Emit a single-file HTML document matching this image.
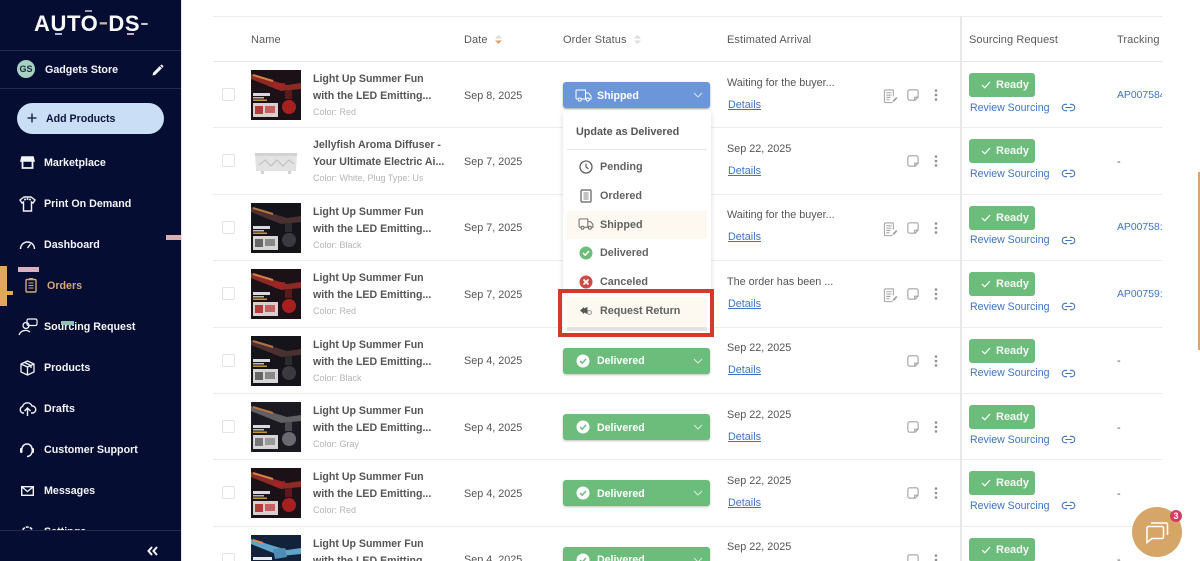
<!DOCTYPE html>
<html lang="en"><head><meta charset="utf-8"><title>Orders</title>
<style>
*{box-sizing:border-box}
html,body{margin:0;padding:0;width:1200px;height:561px;overflow:hidden;background:#fff;font-family:"Liberation Sans",sans-serif;color:#4f4f4f}
.a{position:absolute;white-space:nowrap}
#side{position:absolute;left:0;top:0;width:181px;height:561px;background:#060d33;overflow:hidden}
.nav{position:absolute;left:44px;font-size:10.7px;font-weight:bold;color:#f4f5f8;line-height:14px;white-space:nowrap}
.ic{position:absolute;fill:none;stroke:#f4f5f8;stroke-width:1.6}
#table{position:absolute;left:213px;top:0;width:949px;height:561px;overflow:hidden}
.row{position:absolute;left:0;width:949px;height:66.4px;border-bottom:1px solid #ececec}
.row>*{position:absolute;white-space:nowrap}
.cb{left:9px;top:26px;width:13px;height:13px;border:1px solid #e4e4e4;border-radius:2px}
.img{left:38px;top:8px;width:50px;height:50px}
.t1,.t2{left:100px;font-size:10.6px;font-weight:bold;color:#555;line-height:14px}
.t1{top:10px}.t2{top:27px}
.c{left:100px;top:44px;font-size:9px;color:#b5b5b5;line-height:12px}
.d{left:251px;top:26.500px;font-size:10.800px;color:#555;line-height:14px}
.s{left:350px;top:20px;width:147px;height:26px;border-radius:3px;background:#6cbd7c;box-shadow:0 1px 2px rgba(0,0,0,.25)}
.s b{position:absolute;left:34px;top:6.500px;font-size:10.600px;line-height:14px;color:#fff}
.s svg{position:absolute}
.e{left:514px;top:13.500px;font-size:10.800px;color:#555;line-height:14px}
.l{left:515px;top:35.500px;font-size:10.800px;color:#3f74c4;line-height:14px;text-decoration:underline}
.r{left:756px;top:11px;width:66px;height:24px;background:#6cbd7c;border-radius:3px;color:#f2f8f3;font-size:11px;font-weight:bold;line-height:25px;padding-left:27px}
.r svg{position:absolute;left:12px;top:8px}
.v{left:757px;top:38.500px;font-size:10.600px;color:#3f74c4;line-height:14px}
.lk{left:848px;top:41px}
.tk{left:904px;top:26.500px;font-size:10.400px;color:#3f74c4;line-height:14px}
.st{left:694px;top:27px}.dt{left:721px;top:27px}
.dash{left:904px;top:26.500px;font-size:11px;color:#555;line-height:14px}
.h{position:absolute;top:32.500px;font-size:11px;color:#5a5a5a;line-height:14px;white-space:nowrap;letter-spacing:.1px}
.mi{position:absolute;left:600px;font-size:10.800px;font-weight:bold;color:#626262;line-height:14px;white-space:nowrap}
.mic{position:absolute;left:579px}
</style></head><body>
<svg width="0" height="0" style="position:absolute">
<defs>
<symbol id="prod" viewBox="0 0 50 50">
<rect width="50" height="50" fill="#1b1116"/>
<path d="M0 4L36 15L50 13V19L30 21L0 9Z" fill="#8c2a26"/><path d="M2 5L22 11" stroke="#d97f45" stroke-width="2"/>
<path d="M22 14L34 13L32 18L24 19Z" fill="#a32422"/>
<circle cx="38" cy="37" r="7" fill="#a6201f"/><rect x="34" y="20" width="7" height="9" fill="#5b1a1c"/>
<rect x="2" y="23" width="17" height="3" fill="#d8d8e0"/><rect x="2" y="27" width="11" height="1.500" fill="#bbb"/><rect x="2" y="29.500" width="14" height="1.500" fill="#c89a2e"/>
<rect x="2" y="33" width="25" height="14" fill="#d8cfcf"/><rect x="4" y="36" width="8" height="8" fill="#b53a3a"/><rect x="14" y="36" width="10" height="7" fill="#c76060"/>
</symbol>
<symbol id="prodb" viewBox="0 0 50 50">
<rect width="50" height="50" fill="#13213a"/>
<path d="M0 4L36 15L50 13V19L30 21L0 9Z" fill="#5fa5c9"/><path d="M2 5L12 8" stroke="#e5874b" stroke-width="2"/>
<path d="M22 14L34 13L36 22L24 24Z" fill="#4d8db5"/>
<rect x="2" y="22" width="19" height="3" fill="#e8e8ef"/>
</symbol>
<symbol id="prodk" viewBox="0 0 50 50">
<rect width="50" height="50" fill="#15141a"/>
<path d="M0 4L36 15L50 13V19L30 21L0 9Z" fill="#4a3030"/><path d="M2 5L22 11" stroke="#b8743f" stroke-width="2"/>
<circle cx="38" cy="37" r="7" fill="#3c3a40"/><rect x="34" y="20" width="7" height="9" fill="#2c2c2e"/>
<rect x="2" y="23" width="17" height="3" fill="#d8d8e0"/><rect x="2" y="27" width="11" height="1.500" fill="#bbb"/><rect x="2" y="29.500" width="14" height="1.500" fill="#c89a2e"/>
<rect x="2" y="33" width="25" height="14" fill="#d6d4d4"/><rect x="4" y="36" width="8" height="8" fill="#666"/><rect x="14" y="36" width="10" height="7" fill="#888"/>
</symbol>
<symbol id="prodg" viewBox="0 0 50 50">
<rect width="50" height="50" fill="#1a1a20"/>
<path d="M0 4L36 15L50 13V19L30 21L0 9Z" fill="#5f5f64"/><path d="M2 5L22 11" stroke="#b8743f" stroke-width="2"/>
<circle cx="38" cy="37" r="7" fill="#6a6a70"/><rect x="34" y="20" width="7" height="9" fill="#4a4a4e"/>
<rect x="2" y="23" width="17" height="3" fill="#d8d8e0"/><rect x="2" y="27" width="11" height="1.500" fill="#bbb"/><rect x="2" y="29.500" width="14" height="1.500" fill="#c89a2e"/>
<rect x="2" y="33" width="25" height="14" fill="#d6d4d4"/><rect x="4" y="36" width="8" height="8" fill="#777"/><rect x="14" y="36" width="10" height="7" fill="#999"/>
</symbol>
<symbol id="note" viewBox="0 0 14 14"><path d="M9.500 13H3a2 2 0 0 1-2-2V3a2 2 0 0 1 2-2h8a2 2 0 0 1 2 2v6.500L9.500 13ZM9 13V9.500h4" fill="none" stroke="#a3a3a3" stroke-width="1.300"/></symbol>
<symbol id="dots" viewBox="0 0 4 12"><circle cx="2" cy="1.500" r="1.300" fill="#8f8f8f"/><circle cx="2" cy="6" r="1.300" fill="#8f8f8f"/><circle cx="2" cy="10.500" r="1.300" fill="#8f8f8f"/></symbol>
<symbol id="doc" viewBox="0 0 16 16"><path d="M10 14.500H2.500A1 1 0 0 1 1.500 13.500V2A1 1 0 0 1 2.500 1H11V8M3.500 4H9M3.500 6.500H9M3.500 9H8M3.500 11.500H7" fill="none" stroke="#a3a3a3" stroke-width="1.100"/><path d="M10 14L11 11.500L14 8.500L15.500 9.500L12.500 13Z" fill="#a3a3a3"/></symbol>
<symbol id="link" viewBox="0 0 16 10"><path d="M6.500 1.500H4.500a3.500 3.500 0 0 0 0 7H6.500M9.500 1.500h2a3.500 3.500 0 0 1 0 7H9.500M4.500 5h7" fill="none" stroke="#3f74c4" stroke-width="1.200"/></symbol>
<symbol id="truck" viewBox="0 0 17 13"><path d="M3 10H2A1 1 0 0 1 1 9V2A1 1 0 0 1 2 1H10.500V10H6.500M10.500 4H13.500L16 7V10H14.500M10.500 10H11" fill="none" stroke="currentColor" stroke-width="1"/><circle cx="4.700" cy="10.500" r="1.600" fill="none" stroke="currentColor"/><circle cx="12.700" cy="10.500" r="1.600" fill="none" stroke="currentColor"/></symbol>
<symbol id="chk" viewBox="0 0 10 8"><path d="M1 4L3.800 6.800L9 1" fill="none" stroke="#fff" stroke-width="1.200"/></symbol>
<symbol id="chv" viewBox="0 0 10 6"><path d="M1 1L5 5L9 1" fill="none" stroke="#fff" stroke-width=".9" opacity=".8"/></symbol>
</defs></svg>

<div id="table">
<div class="a" style="left:0;top:16px;width:949px;height:1px;background:#ececec"></div>
<div class="a" style="left:0;top:61px;width:949px;height:1px;background:#e6e6e6"></div>
<div class="h" style="left:38px">Name</div>
<div class="h" style="left:251px">Date</div>
<svg class="a" style="left:281px;top:34px" width="9" height="11" viewBox="0 0 9 11"><path d="M1 4.500L4.500 1L8 4.500Z" fill="#dcdcdc"/><path d="M1 6.500L4.500 10L8 6.500Z" fill="#d9a766"/></svg>
<div class="h" style="left:350px">Order Status</div>
<svg class="a" style="left:420px;top:34px" width="9" height="11" viewBox="0 0 9 11"><path d="M1 4.500L4.500 1L8 4.500Z" fill="#dcdcdc"/><path d="M1 6.500L4.500 10L8 6.500Z" fill="#dcdcdc"/></svg>
<div class="h" style="left:514px">Estimated Arrival</div>
<div class="h" style="left:756px">Sourcing Request</div>
<div class="h" style="left:904px">Tracking</div>

<!-- row 1 -->
<div class="row" style="top:62px">
<div class="cb"></div><svg class="img"><use href="#prod"/></svg>
<div class="t1">Light Up Summer Fun</div><div class="t2">with the LED Emitting...</div><div class="c">Color: Red</div>
<div class="d">Sep 8, 2025</div>
<div class="e">Waiting for the buyer...</div><div class="l">Details</div>
<svg style="left:670px;top:27px" width="15" height="15"><use href="#doc"/></svg>
<svg class="st" width="12" height="12"><use href="#note"/></svg><svg class="dt" width="4" height="12"><use href="#dots"/></svg>
<div class="r"><svg width="10" height="8"><use href="#chk"/></svg>Ready</div><div class="v">Review Sourcing</div><svg class="lk" width="15" height="9"><use href="#link"/></svg>
<div class="tk" style="width:45px;overflow:hidden">AP00758422</div>
</div>
<!-- row 2 -->
<div class="row" style="top:128.400px">
<div class="cb"></div>
<svg class="img" viewBox="0 0 50 50"><path d="M4 17H46L45 35H5Z" fill="#e2e2e2"/><path d="M4 17H46V20H4Z" fill="#d2d2d2"/><path d="M8 29L14 24L20 30L26 24L32 30L38 24L43 28" stroke="#bdbdbd" fill="none"/><rect x="10" y="35" width="3" height="3" fill="#d2d2d2"/><rect x="37" y="35" width="3" height="3" fill="#d2d2d2"/></svg>
<div class="t1">Jellyfish Aroma Diffuser -</div><div class="t2">Your Ultimate Electric Ai...</div><div class="c">Color: White, Plug Type: Us</div>
<div class="d">Sep 7, 2025</div>
<div class="e">Sep 22, 2025</div><div class="l">Details</div>
<svg class="st" width="12" height="12"><use href="#note"/></svg><svg class="dt" width="4" height="12"><use href="#dots"/></svg>
<div class="r"><svg width="10" height="8"><use href="#chk"/></svg>Ready</div><div class="v">Review Sourcing</div><svg class="lk" width="15" height="9"><use href="#link"/></svg>
<div class="dash">-</div>
</div>
<!-- row 3 -->
<div class="row" style="top:194.800px">
<div class="cb"></div><svg class="img"><use href="#prodk"/></svg>
<div class="t1">Light Up Summer Fun</div><div class="t2">with the LED Emitting...</div><div class="c">Color: Black</div>
<div class="d">Sep 7, 2025</div>
<div class="e">Waiting for the buyer...</div><div class="l">Details</div>
<svg style="left:670px;top:27px" width="15" height="15"><use href="#doc"/></svg>
<svg class="st" width="12" height="12"><use href="#note"/></svg><svg class="dt" width="4" height="12"><use href="#dots"/></svg>
<div class="r"><svg width="10" height="8"><use href="#chk"/></svg>Ready</div><div class="v">Review Sourcing</div><svg class="lk" width="15" height="9"><use href="#link"/></svg>
<div class="tk" style="width:45px;overflow:hidden">AP00758:22</div>
</div>
<!-- row 4 -->
<div class="row" style="top:261.200px">
<div class="cb"></div><svg class="img"><use href="#prod"/></svg>
<div class="t1">Light Up Summer Fun</div><div class="t2">with the LED Emitting...</div><div class="c">Color: Red</div>
<div class="d">Sep 7, 2025</div>
<div class="e">The order has been ...</div><div class="l">Details</div>
<svg style="left:670px;top:27px" width="15" height="15"><use href="#doc"/></svg>
<svg class="st" width="12" height="12"><use href="#note"/></svg><svg class="dt" width="4" height="12"><use href="#dots"/></svg>
<div class="r"><svg width="10" height="8"><use href="#chk"/></svg>Ready</div><div class="v">Review Sourcing</div><svg class="lk" width="15" height="9"><use href="#link"/></svg>
<div class="tk" style="width:45px;overflow:hidden">AP00759:22</div>
</div>
<!-- row 5 -->
<div class="row" style="top:327.600px">
<div class="cb"></div><svg class="img"><use href="#prodk"/></svg>
<div class="t1">Light Up Summer Fun</div><div class="t2">with the LED Emitting...</div><div class="c">Color: Black</div>
<div class="d">Sep 4, 2025</div>
<div class="s"><svg style="left:13px;top:6px" width="14" height="14" viewBox="0 0 14 14"><circle cx="7" cy="7" r="6.500" fill="#fff"/><path d="M4 7L6.200 9.200L10 5" fill="none" stroke="#6cbd7c" stroke-width="1.500"/></svg><b>Delivered</b><svg style="left:130px;top:10px" width="10" height="6"><use href="#chv"/></svg></div>
<div class="e">Sep 22, 2025</div><div class="l">Details</div>
<svg class="st" width="12" height="12"><use href="#note"/></svg><svg class="dt" width="4" height="12"><use href="#dots"/></svg>
<div class="r"><svg width="10" height="8"><use href="#chk"/></svg>Ready</div><div class="v">Review Sourcing</div><svg class="lk" width="15" height="9"><use href="#link"/></svg>
<div class="dash">-</div>
</div>
<!-- row 6 -->
<div class="row" style="top:394px">
<div class="cb"></div><svg class="img"><use href="#prodg"/></svg>
<div class="t1">Light Up Summer Fun</div><div class="t2">with the LED Emitting...</div><div class="c">Color: Gray</div>
<div class="d">Sep 4, 2025</div>
<div class="s"><svg style="left:13px;top:6px" width="14" height="14" viewBox="0 0 14 14"><circle cx="7" cy="7" r="6.500" fill="#fff"/><path d="M4 7L6.200 9.200L10 5" fill="none" stroke="#6cbd7c" stroke-width="1.500"/></svg><b>Delivered</b><svg style="left:130px;top:10px" width="10" height="6"><use href="#chv"/></svg></div>
<div class="e">Sep 22, 2025</div><div class="l">Details</div>
<svg class="st" width="12" height="12"><use href="#note"/></svg><svg class="dt" width="4" height="12"><use href="#dots"/></svg>
<div class="r"><svg width="10" height="8"><use href="#chk"/></svg>Ready</div><div class="v">Review Sourcing</div><svg class="lk" width="15" height="9"><use href="#link"/></svg>
<div class="dash">-</div>
</div>
<!-- row 7 -->
<div class="row" style="top:460.400px">
<div class="cb"></div><svg class="img"><use href="#prod"/></svg>
<div class="t1">Light Up Summer Fun</div><div class="t2">with the LED Emitting...</div><div class="c">Color: Red</div>
<div class="d">Sep 4, 2025</div>
<div class="s"><svg style="left:13px;top:6px" width="14" height="14" viewBox="0 0 14 14"><circle cx="7" cy="7" r="6.500" fill="#fff"/><path d="M4 7L6.200 9.200L10 5" fill="none" stroke="#6cbd7c" stroke-width="1.500"/></svg><b>Delivered</b><svg style="left:130px;top:10px" width="10" height="6"><use href="#chv"/></svg></div>
<div class="e">Sep 22, 2025</div><div class="l">Details</div>
<svg class="st" width="12" height="12"><use href="#note"/></svg><svg class="dt" width="4" height="12"><use href="#dots"/></svg>
<div class="r"><svg width="10" height="8"><use href="#chk"/></svg>Ready</div><div class="v">Review Sourcing</div><svg class="lk" width="15" height="9"><use href="#link"/></svg>
<div class="dash">-</div>
</div>
<!-- row 8 -->
<div class="row" style="top:526.800px;height:34.200px;overflow:hidden;border-bottom:0">
<div class="cb"></div><svg class="img"><use href="#prodb"/></svg>
<div class="t1">Light Up Summer Fun</div><div class="t2">with the LED Emitting...</div>
<div class="d">Sep 4, 2025</div>
<div class="s"><svg style="left:13px;top:6px" width="14" height="14" viewBox="0 0 14 14"><circle cx="7" cy="7" r="6.500" fill="#fff"/><path d="M4 7L6.200 9.200L10 5" fill="none" stroke="#6cbd7c" stroke-width="1.500"/></svg><b>Delivered</b><svg style="left:130px;top:10px" width="10" height="6"><use href="#chv"/></svg></div>
<div class="e">Sep 22, 2025</div>
<svg class="st" width="12" height="12"><use href="#note"/></svg><svg class="dt" width="4" height="12"><use href="#dots"/></svg>
<div class="r"><svg width="10" height="8"><use href="#chk"/></svg>Ready</div>
<div class="dash">-</div>
</div>
</div>

<!-- column divider -->
<div class="a" style="left:960px;top:16px;width:2px;height:545px;background:#e8e8e8"></div>
<div class="a" style="left:1198px;top:172px;width:2px;height:178px;background:#dfa36c"></div>

<!-- shipped button -->
<div class="a" style="left:563px;top:82px;width:147px;height:26px;border-radius:3px;background:#6b97da;box-shadow:0 1px 2px rgba(0,0,0,.35)"></div>
<svg class="a" style="left:575px;top:89px;color:#fff" width="17" height="13"><use href="#truck"/></svg>
<div class="a" style="left:597px;top:88.500px;font-size:10.600px;font-weight:bold;color:#fff;line-height:14px">Shipped</div>
<svg class="a" style="left:693px;top:92px" width="10" height="6"><use href="#chv"/></svg>

<!-- dropdown -->
<div class="a" style="left:563px;top:110px;width:148px;height:224px;background:#fff;border-radius:3px;box-shadow:0 2px 6px rgba(0,0,0,.14)"></div>
<div class="a" style="left:576px;top:125px;font-size:10.800px;font-weight:bold;color:#555;line-height:14px">Update as Delivered</div>
<div class="a" style="left:567px;top:149px;width:140px;height:1px;background:#e8e8e8"></div>
<div class="a" style="left:567px;top:211px;width:140px;height:28px;background:#fdf8f0"></div>
<div class="a" style="left:567px;top:297px;width:140px;height:30px;background:#fdf8f0"></div>
<div class="a" style="left:567px;top:327px;width:140px;height:4px;background:#e4e2e0"></div>
<svg class="mic" style="top:160px" width="14" height="14" viewBox="0 0 14 14"><circle cx="7" cy="7" r="6" fill="none" stroke="#5f5f5f" stroke-width="1.300"/><path d="M7 3.500V7L9.500 9" fill="none" stroke="#5f5f5f" stroke-width="1.200"/></svg>
<div class="mi" style="top:160px">Pending</div>
<svg class="mic" style="left:580px;top:189px" width="12" height="14" viewBox="0 0 12 14"><rect x="1" y="1" width="10" height="12" rx="1" fill="none" stroke="#5f5f5f" stroke-width="1.200"/><path d="M3.500 4H8.500M3.500 6H8.500M3.500 8H8.500M3.500 10H8.500" stroke="#5f5f5f" stroke-width=".8"/></svg>
<div class="mi" style="top:189px">Ordered</div>
<svg class="mic" style="left:578px;top:218px;color:#5f5f5f" width="16" height="12"><use href="#truck"/></svg>
<div class="mi" style="top:218px">Shipped</div>
<svg class="mic" style="top:246px" width="14" height="14" viewBox="0 0 14 14"><circle cx="7" cy="7" r="6.500" fill="#6cbd7c"/><path d="M4 7L6.200 9.200L10 5" fill="none" stroke="#fff" stroke-width="1.500"/></svg>
<div class="mi" style="top:246px">Delivered</div>
<svg class="mic" style="top:275px" width="14" height="14" viewBox="0 0 14 14"><circle cx="7" cy="7" r="6.500" fill="#cf4a45"/><path d="M4.500 4.500L9.500 9.500M9.500 4.500L4.500 9.500" stroke="#fff" stroke-width="1.700"/></svg>
<div class="mi" style="top:275px">Canceled</div>
<svg class="mic" style="left:580px;top:305px" width="13" height="11" viewBox="0 0 13 11"><path d="M0 5.500L4 2V3.500L7.500 2V9L4 7.500V9Z" fill="#555"/><circle cx="9.500" cy="7.500" r="2" fill="none" stroke="#999"/></svg>
<div class="mi" style="top:304px">Request Return</div>
<div class="a" style="left:558px;top:288.500px;width:156px;height:48px;border:4px solid #d6392a"></div>

<!-- sidebar -->
<div id="side">
<div class="a" style="left:34px;top:11px;font-size:22px;line-height:26px;font-weight:bold;color:#f7f7f7;letter-spacing:.6px">AUTO<span style="color:#c9b79c;font-weight:normal;font-size:30px;line-height:0;letter-spacing:0">-</span>DS<span style="color:#c9cfc8;font-weight:normal;font-size:26px;line-height:0;letter-spacing:0">-</span></div>
<div class="a" style="left:85px;top:10px;width:7px;height:2px;background:#9aa0a8"></div>
<div class="a" style="left:55px;top:33px;width:7px;height:2px;background:#a9bbd0"></div>
<div class="a" style="left:127px;top:33px;width:7px;height:2px;background:#caa9bb"></div>
<div class="a" style="left:0;top:50px;width:181px;height:1px;background:#222a4f"></div>
<div class="a" style="left:0;top:88px;width:181px;height:1px;background:#222a4f"></div>
<div class="a" style="left:17px;top:60px;width:18px;height:18px;border-radius:50%;background:#a6d2c1;color:#1c2a44;font-size:9px;font-weight:bold;line-height:18px;text-align:center">GS</div>
<div class="a" style="left:45px;top:62.500px;font-size:10.700px;font-weight:bold;color:#f4f5f8;line-height:14px">Gadgets Store</div>
<svg class="a" style="left:152px;top:64px" width="12" height="12" viewBox="0 0 11 11"><path d="M0.500 10.500L1 8L7 2L9 4L3 10ZM8 1L9 0.500L10.500 2L10 3L9.500 3.500L7.500 1.500Z" fill="#f4f5f8"/></svg>
<div class="a" style="left:17px;top:103px;width:147px;height:31px;border-radius:16px;background:#cadff6"></div>
<svg class="a" style="left:27px;top:113px" width="10" height="10" viewBox="0 0 10 10"><path d="M5 .5V9.500M.5 5H9.500" stroke="#0b1338" stroke-width="1.300"/></svg>
<div class="a" style="left:46px;top:111.500px;font-size:10.600px;font-weight:bold;color:#0b1338;line-height:14px">Add Products</div>

<svg class="ic" style="left:20px;top:156px" width="15" height="13" viewBox="0 0 15 13"><path d="M2 1H13L14 5H1Z" fill="#f4f5f8"/><path d="M2.500 5V12H12.500V5" stroke-width="1.800"/></svg>
<div class="nav" style="top:155.500px">Marketplace</div>
<svg class="ic" style="left:19px;top:196px" width="17" height="16" viewBox="0 0 17 16"><path d="M5 1L1 4L3 7L4.500 6V15H12.500V6L14 7L16 4L12 1Z" stroke-width="1.400"/><circle cx="6" cy="3.500" r="1" fill="#f4f5f8" stroke="none"/><circle cx="8.500" cy="3" r="1" fill="#f4f5f8" stroke="none"/><circle cx="11" cy="3.500" r="1" fill="#f4f5f8" stroke="none"/></svg>
<div class="nav" style="top:196.500px">Print On Demand</div>
<svg class="ic" style="left:19px;top:238px" width="17" height="12" viewBox="0 0 17 12"><path d="M1.500 11A7 7 0 0 1 15.500 11M8.500 10L11.500 6" stroke-width="1.400"/></svg>
<div class="nav" style="top:237.500px">Dashboard</div>
<svg class="ic" style="left:25px;top:278px;stroke:#d6a878" width="12" height="15" viewBox="0 0 12 15"><rect x="1" y="1.500" width="10" height="12.500" rx="1" stroke-width="1.400"/><path d="M3.500 5H8.500M3.500 7.500H8.500M3.500 10H8.500" stroke-width="1"/><path d="M4 .500H8" stroke-width="1.500"/></svg>
<div class="nav" style="left:47px;top:278.500px;color:#d6a878">Orders</div>
<svg class="ic" style="left:18px;top:318px" width="20" height="18" viewBox="0 0 20 18"><rect x="9" y="1" width="10" height="6.500" rx="1.500" stroke-width="1.200"/><circle cx="8" cy="7.500" r="3" stroke-width="1.300"/><path d="M1 17A7 7 0 0 1 12 14" stroke-width="1.300"/></svg>
<div class="nav" style="top:320px">Sourcing Request</div>
<svg class="ic" style="left:20px;top:360px" width="15" height="16" viewBox="0 0 15 16"><path d="M7.500 1L14 4V12L7.500 15L1 12V4ZM1 4L7.500 7L14 4M7.500 7V15M4.500 2.500L11 5.500V8" stroke-width="1.300"/></svg>
<div class="nav" style="top:361px">Products</div>
<svg class="ic" style="left:18px;top:401px" width="19" height="16" viewBox="0 0 19 16"><path d="M6 12H4.500A3.500 3.500 0 0 1 4.500 5.500A5 5 0 0 1 14 5A3.500 3.500 0 0 1 14.500 12H13M9.500 15V7.500M6.500 10L9.500 7L12.500 10" stroke-width="1.400"/></svg>
<div class="nav" style="top:402px">Drafts</div>
<svg class="ic" style="left:19px;top:442px" width="16" height="16" viewBox="0 0 16 16"><path d="M3 7A5 5 0 0 1 13 7M13 10A5 5 0 0 1 8 14.500" stroke-width="1.500"/><rect x="1" y="6" width="2.500" height="5" rx="1" fill="#f4f5f8" stroke="none"/><rect x="12.500" y="6" width="2.500" height="5" rx="1" fill="#f4f5f8" stroke="none"/></svg>
<div class="nav" style="top:443px">Customer Support</div>
<svg class="ic" style="left:21px;top:486px" width="13" height="10" viewBox="0 0 13 10"><rect x=".7" y=".7" width="11.600" height="8.600" stroke-width="1.400"/><path d="M1 1L6.500 5.500L12 1" stroke-width="1.300"/></svg>
<div class="nav" style="top:484px">Messages</div>
<svg class="ic" style="left:20px;top:525px" width="15" height="15" viewBox="0 0 15 15"><circle cx="7.500" cy="7.500" r="5.500" stroke-width="1.600" stroke-dasharray="3 1"/></svg>
<div class="nav" style="top:525px">Settings</div>
<div class="a" style="left:0;top:530px;width:181px;height:31px;background:#060d33;border-top:1px solid #222a4f"></div>
<svg class="a" style="left:147px;top:546px" width="11" height="10" viewBox="0 0 11 10"><path d="M5 1L1.500 5L5 9M10 1L6.500 5L10 9" fill="none" stroke="#f4f5f8" stroke-width="2"/></svg>

<div class="a" style="left:166px;top:235px;width:15px;height:5px;background:#d9b0ae"></div>
<div class="a" style="left:18px;top:267px;width:21px;height:5px;background:#d9b0c0"></div>
<div class="a" style="left:0;top:266px;width:7px;height:40px;background:#e2a85a"></div>
<div class="a" style="left:7px;top:291px;width:6px;height:4px;background:#e2a85a"></div>
<div class="a" style="left:61px;top:321px;width:13px;height:4px;background:#8fc3b0"></div>
</div>
<div class="a" style="left:181px;top:0;width:1px;height:561px;background:#e6e6e6"></div>

<!-- chat bubble -->
<div class="a" style="left:1132px;top:507px;width:50px;height:50px;border-radius:50%;background:#d5a668"></div>
<svg class="a" style="left:1145px;top:520px" width="24" height="24" viewBox="0 0 24 24"><path d="M2 8A1.500 1.500 0 0 1 3.500 6.500H17A1.500 1.500 0 0 1 18.500 8V17A1.500 1.500 0 0 1 17 18.500H7L2 22.500Z" fill="none" stroke="#fff" stroke-width="1.500"/><path d="M6 3H21A1.500 1.500 0 0 1 22.500 4.500V15" fill="none" stroke="#fff" stroke-width="1.500"/></svg>
<div class="a" style="left:1170px;top:510px;width:12px;height:12px;border-radius:50%;background:#d63c62;color:#fff;font-size:9px;font-weight:bold;line-height:12px;text-align:center">3</div>
</body></html>
